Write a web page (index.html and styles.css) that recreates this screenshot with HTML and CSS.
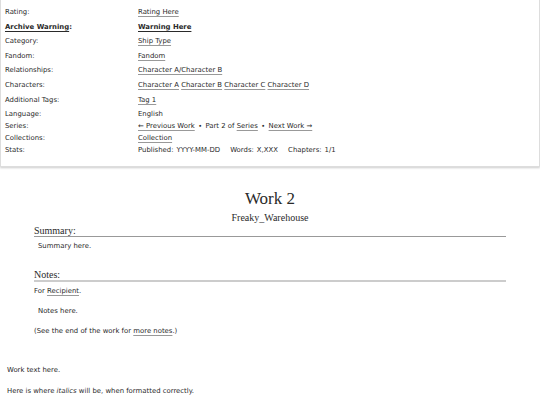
FILE: index.html
```html
<!DOCTYPE html>
<html lang="en">
<head>
    <meta charset="UTF-8">
    <title>Work 2</title>
    <link rel="stylesheet" href="styles.css">
</head>
<body>
    <div class="meta">
        <dl class="meta-list">
            <dt class="tag-row">Rating:</dt>
            <dd class="tag-row"><a href="#">Rating Here</a></dd>

            <dt class="tag-row warning"><a href="#">Archive Warning</a>:</dt>
            <dd class="tag-row warning"><a href="#">Warning Here</a></dd>

            <dt class="tag-row">Category:</dt>
            <dd class="tag-row"><a href="#">Ship Type</a></dd>

            <dt class="tag-row">Fandom:</dt>
            <dd class="tag-row"><a href="#">Fandom</a></dd>

            <dt class="tag-row">Relationships:</dt>
            <dd class="tag-row"><a href="#">Character A/Character B</a></dd>

            <dt class="tag-row">Characters:</dt>
            <dd class="tag-row"><a href="#">Character A</a> <a href="#">Character B</a> <a href="#">Character C</a> <a href="#">Character D</a></dd>

            <dt class="tag-row last">Additional Tags:</dt>
            <dd class="tag-row last"><a href="#">Tag 1</a></dd>

            <dt>Language:</dt>
            <dd>English</dd>

            <dt>Series:</dt>
            <dd><a href="#">← Previous Work</a> <span class="divider">∙</span> Part 2 of <a href="#">Series</a> <span class="divider">∙</span> <a href="#">Next Work →</a></dd>

            <dt>Collections:</dt>
            <dd><a href="#">Collection</a></dd>

            <dt>Stats:</dt>
            <dd class="stats">
                <span>Published:</span><span class="stat-val">YYYY-MM-DD</span>
                <span>Words:</span><span class="stat-val">X,XXX</span>
                <span>Chapters:</span><span class="stat-val">1/1</span>
            </dd>
        </dl>
    </div>

    <div class="preface">
        <h2 class="title">Work 2</h2>
        <h3 class="byline">Freaky_Warehouse</h3>

        <div class="summary">
            <h3 class="heading">Summary:</h3>
            <p class="indent">Summary here.</p>
        </div>

        <div class="notes">
            <h3 class="heading notes-heading">Notes:</h3>
            <p class="for-line">For <a href="#">Recipient</a>.</p>
            <p class="indent note-body">Notes here.</p>
            <p class="note-body">(See the end of the work for <a href="#">more notes</a>.)</p>
        </div>
    </div>

    <div class="userstuff">
        <p class="first">Work text here.</p>
        <p>Here is where <em>italics</em> will be, when formatted correctly.</p>
    </div>
</body>
</html>
```

FILE: styles.css
```css
* {
    margin: 0;
    padding: 0;
    box-sizing: border-box;
}

body {
    font-family: "DejaVu Sans", Verdana, sans-serif;
    font-size: 6.9px;
    color: #2a2a2a;
    background-color: #fff;
}

a {
    color: #2a2a2a;
    text-decoration: underline;
    text-decoration-color: #999;
    text-underline-offset: 1.5px;
}

/* work meta box */
.meta {
    width: 540px;
    border: 1px solid #ddd;
    border-top: none;
    box-shadow: 0 1px 2px #ccc;
    padding: 5px 4px 10px 4px;
}

.meta-list {
    display: grid;
    grid-template-columns: 133px 1fr;
}

.meta-list dt,
.meta-list dd {
    line-height: 12px;
}

.meta-list .tag-row {
    line-height: 14.6px;
}

.meta-list .last {
    margin-bottom: 1px;
}

.warning {
    font-weight: bold;
}

.warning a {
    text-decoration-color: #2a2a2a;
}

.divider {
    margin: 0 1px;
}

.stats span {
    margin-right: 3px;
}

.stats .stat-val {
    margin-right: 8px;
}

/* title, byline, summary, notes */
.preface {
    margin: 22px 34px 0;
}

.title,
.byline,
.heading {
    font-family: "Liberation Serif", "Times New Roman", serif;
    font-weight: normal;
    color: #2a2a2a;
}

.title {
    font-size: 17px;
    line-height: 20px;
    text-align: center;
}

.byline {
    font-size: 10px;
    line-height: 14px;
    text-align: center;
    margin-top: 2px;
}

.heading {
    font-size: 10px;
    line-height: 10px;
    border-bottom: 1px solid #999;
    margin-top: 1px;
}

.summary p {
    line-height: 10px;
    margin-top: 4px;
}

.indent {
    padding-left: 4px;
}

.notes-heading {
    margin-top: 19px;
    border-bottom: 2px solid #ccc;
}

.notes p {
    line-height: 10px;
}

.for-line {
    margin-top: 4px;
}

.note-body {
    margin-top: 10px;
}

/* chapter text */
.userstuff {
    padding-left: 7px;
}

.userstuff p {
    line-height: 10px;
    margin-top: 11px;
}

.userstuff .first {
    margin-top: 29px;
}
```
